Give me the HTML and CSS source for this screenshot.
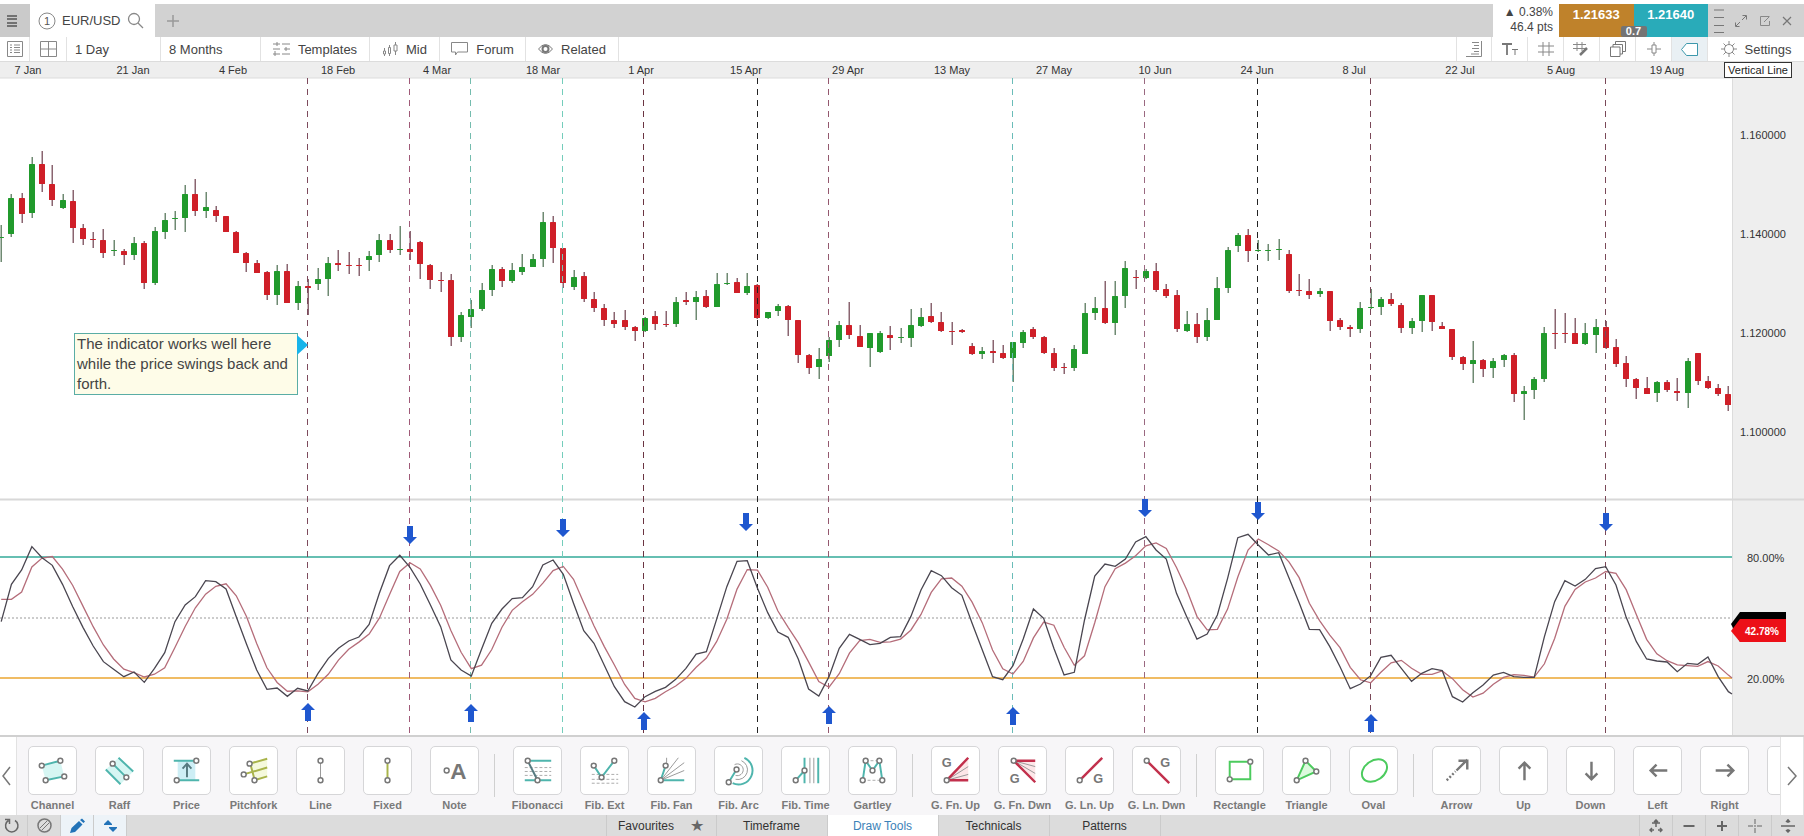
FILE: index.html
```html
<!DOCTYPE html>
<html lang="en">
<head>
  <meta charset="UTF-8">
  <meta name="viewport" content="width=device-width, initial-scale=1.0">
  <title>EUR/USD</title>
  <link rel="stylesheet" href="styles.css">
</head>
<body>
  <header class="topbar">
    <button class="menu-btn" aria-label="Menu">
      <svg width="14" height="14" viewBox="0 0 14 14"><path d="M2 2h10M2 5h10M2 9h10M2 12h10" stroke="#555" stroke-width="1.5"/></svg>
    </button>
    <div class="tab">
      <svg width="18" height="18" viewBox="0 0 18 18"><circle cx="9" cy="9" r="8" fill="none" stroke="#888"/><text x="9" y="13" font-size="11" text-anchor="middle" fill="#555">1</text></svg>
      <span>EUR/USD</span>
      <svg width="17" height="17" viewBox="0 0 17 17" fill="none" stroke="#888" stroke-width="1.3"><circle cx="7" cy="7" r="5.5"/><path d="M11 11l5 5"/></svg>
    </div>
    <button class="add-btn" aria-label="Add tab">
      <svg width="12" height="12" viewBox="0 0 12 12"><path d="M6 0v12M0 6h12" stroke="#999" stroke-width="1.5"/></svg>
    </button>
    <div class="change">
      <div>▲ 0.38%</div>
      <div>46.4 pts</div>
    </div>
    <div class="prices">
      <button class="price sell">1.21633</button>
      <button class="price buy">1.21640</button>
      <span class="spread">0.7</span>
    </div>
    <div class="window-btns">
      <svg width="10" height="26" viewBox="0 0 10 26"><path d="M0 2h10M0 9.500h10M0 17.500h10M0 24.500h10" stroke="#777"/></svg>
      <button aria-label="Expand"><svg width="12" height="12" viewBox="0 0 12 12" fill="none" stroke="#777"><path d="M7.500 .5h4v4M4.500 11.500h-4v-4M11 1L7 5M1 11l4-4"/></svg></button>
      <button aria-label="Pop out"><svg width="12" height="12" viewBox="0 0 12 12" fill="none" stroke="#888"><path d="M10.500 1.500h-9v9h9V6M5 7l5-5"/></svg></button>
      <button aria-label="Close"><svg width="10" height="10" viewBox="0 0 10 10" stroke="#777" stroke-width="1.2"><path d="M1 1l8 8M9 1L1 9"/></svg></button>
    </div>
  </header>

  <nav class="toolbar">
    <button class="tool-item w30" aria-label="List">
      <svg width="16" height="16" viewBox="0 0 16 16" fill="none" stroke="#888"><path d="M.5 .5h15v15H.5zM3 4h2M7 4h6M3 6.500h2M7 6.500h6M3 9h2M7 9h6M3 11.500h2M7 11.500h6"/></svg>
    </button>
    <button class="tool-item w37" aria-label="Layout">
      <svg width="17" height="16" viewBox="0 0 17 16" fill="none" stroke="#888"><path d="M.5 .5h16v15H.5zM8.500 .5v15M.5 8h16"/></svg>
    </button>
    <select class="tool-select w94" aria-label="Interval"><option>1 Day</option></select>
    <select class="tool-select w100" aria-label="Range"><option>8 Months</option></select>
    <button class="tool-item w109">
      <svg width="17" height="14" viewBox="0 0 17 14" stroke="#888" fill="none"><path d="M0 2h7M9 2h8M0 7h7M11 7h6M0 12h7M9 12h8M4 0v4M2 9v5M13 5v4"/></svg>
      Templates
    </button>
    <button class="tool-item w70">
      <svg width="16" height="14" viewBox="0 0 16 14" stroke="#888" fill="none"><path d="M2.500 6v8M7.500 3v11M13.500 0v13"/><path d="M1.500 9h2v3h-2zM6.500 5.500h2v6h-2zM12 3h3v6h-3z" fill="#fff"/></svg>
      Mid
    </button>
    <button class="tool-item w86">
      <svg width="17" height="14" viewBox="0 0 17 14" stroke="#888" fill="none"><path d="M.5 .5h16v9.500H6.500L4.500 13v-3h-4z"/></svg>
      Forum
    </button>
    <button class="tool-item w93">
      <svg width="15" height="12" viewBox="0 0 15 12" fill="none" stroke="#777"><path d="M.5 6Q7.500-3 14.500 6 7.500 15 .5 6z"/><circle cx="7.500" cy="6" r="3" stroke-width="2"/></svg>
      Related
    </button>
    <div class="spacer"></div>
    <button class="tool-item w36 first" aria-label="Scale">
      <svg width="16" height="16" viewBox="0 0 16 16" stroke="#888" fill="none"><path d="M15.500 0v15.500H0M6 1.500h7M8 4.500h5M6 7.500h7M8 10.500h5M5 13h8"/></svg>
    </button>
    <button class="tool-item w36" aria-label="Text size">
      <svg width="16" height="14" viewBox="0 0 16 14" stroke="#777" fill="none"><path d="M0 2h10M5 2v11" stroke-width="1.8"/><path d="M10 7.500h6M13 7.500V13"/></svg>
    </button>
    <button class="tool-item w36" aria-label="Grid">
      <svg width="16" height="16" viewBox="0 0 16 16" stroke="#888" fill="none"><path d="M5 1v14M11 1v14M0 5h16M0 11h16"/></svg>
    </button>
    <button class="tool-item w36" aria-label="Edit grid">
      <svg width="17" height="16" viewBox="0 0 17 16" stroke="#888" fill="none"><path d="M4 1v9M9 1v9M0 3.500h13M0 7.500h12"/><path d="M7 14l7-7" stroke="#777" stroke-width="2.5"/></svg>
    </button>
    <button class="tool-item w36" aria-label="Layers">
      <svg width="16" height="16" viewBox="0 0 16 16" stroke="#777" fill="none"><path d="M.5 6h9.500v9.500H.5zM3 6V3.500h9.500v9.500H10M5.500 3.500V.5h10v10h-3"/></svg>
    </button>
    <button class="tool-item w36" aria-label="Marker">
      <svg width="14" height="14" viewBox="0 0 14 14" stroke="#888" fill="none"><path d="M7 0v3M7 11v3M0 7h5M9 7h5M5 3h4v8H5z"/></svg>
    </button>
    <button class="tool-item w36 active" aria-label="Label">
      <svg width="17" height="13" viewBox="0 0 17 13" stroke="#3d98ac" fill="#fff"><path d="M5.500 .5h11v12h-11L.5 6.500z"/></svg>
    </button>
    <button class="tool-item w96">
      <svg width="16" height="16" viewBox="0 0 16 16" stroke="#888" fill="none"><circle cx="8" cy="8" r="4.500"/><path d="M8 0v3.500M8 12.500V16M0 8h3.500M12.500 8H16M2.500 2.500L5 5M11 11l2.500 2.500M13.500 2.500L11 5M5 11l-2.500 2.500"/></svg>
      Settings
    </button>
  </nav>

  <main class="chart">
    <svg id="chart" class="chart-svg" viewBox="0 0 1804 676">
      <rect x="0" y="0" width="1804" height="17" fill="#eeeeee"/>
      <rect x="1732" y="17" width="72" height="659" fill="#eeeeee"/>
      <path d="M0 .5h1804M0 17h1732M1732.500 17v659" stroke="#dcdcdc"/>
      <g id="dates" class="axis-text"></g>
      <rect x="1724.500" y="1.500" width="67" height="15" fill="#fff" stroke="#333"/>
      <text class="hint" x="1758" y="13">Vertical Line</text>
      <g transform="translate(0 17)">
        <path d="M0 421.500h1804" stroke="#d8d8d8" stroke-width="2"/>
        <path d="M0 479h1732" stroke="#66bfb2" stroke-width="2"/>
        <path d="M0 540h1732" stroke="#999" stroke-dasharray="2 2"/>
        <path d="M0 600h1732" stroke="#f0bc64" stroke-width="2"/>
        <g id="candles"></g>
        <g id="vlines"></g>
        <g id="lines" fill="none"></g>
        <g id="arrows" fill="#1f57cf"></g>
        <g id="levels" class="axis-text"></g>
        <path d="M1731 546l9-12h46v30h-46z" fill="#000"/>
        <path d="M1731 553l9-12h46v23h-46z" fill="#ec1018"/>
        <text class="tag" x="1762" y="557">42.78%</text>
        <path d="M0 658h1804" stroke="#d0d0d0" stroke-width="2"/>
      </g>
    </svg>
    <div class="note">The indicator works well here while the price swings back and forth.</div>
  </main>

  <section class="drawtools">
    <button class="scroll-btn" aria-label="Previous tools"><svg width="9" height="20" viewBox="0 0 9 20"><path d="M8 1L1 10l7 9"/></svg></button>
    <div class="tools">
      <button class="tool"><svg viewBox="0 0 48 48"><path d="M13 19l19-5 4 16-19 4z" fill="#d6f6f3"/><path class="teal" d="M13 19l19-5M17 34l19-4"/><circle cx="13" cy="19" r="2.500"/><circle cx="32" cy="14" r="2.500"/><circle cx="17" cy="34" r="2.500"/><circle cx="36" cy="30" r="2.500"/></svg>Channel</button>
      <button class="tool"><svg viewBox="0 0 48 48"><path d="M10 23L23 11l15 14-13 13z" fill="#d6f6f3"/><path class="teal" d="M10 23l15 15M23 11l15 14M17 17l14 14"/><circle cx="17" cy="17" r="2.500"/><circle cx="31" cy="31" r="2.500"/></svg>Raff</button>
      <button class="tool"><svg viewBox="0 0 48 48"><path d="M15 14h18v20H15z" fill="#cdeef5"/><path class="teal" d="M11 14h22M15 34h22"/><path class="dark" d="M24.500 31V18M20 22l4.500-5 4.500 5"/><circle cx="34" cy="14" r="2.500"/><circle cx="14" cy="34" r="2.500"/></svg>Price</button>
      <button class="tool"><svg viewBox="0 0 48 48"><path d="M22 17l16-5v18l-13 4z" fill="#f5f9dc"/><path class="olive" d="M20 17l18-5M14 28l24-7M25 34l13-4M21 18l4 15"/><circle cx="20" cy="17" r="2.500"/><circle cx="14" cy="28" r="2.500"/><circle cx="25" cy="34" r="2.500"/></svg>Pitchfork</button>
      <button class="tool"><svg viewBox="0 0 48 48"><path class="gray" d="M24 14v20"/><circle cx="24" cy="14" r="2.500"/><circle cx="24" cy="34" r="2.500"/></svg>Line</button>
      <button class="tool"><svg viewBox="0 0 48 48"><path class="olive" d="M24 14v20"/><circle cx="24" cy="14" r="2.500"/><circle cx="24" cy="34" r="2.500"/></svg>Fixed</button>
      <button class="tool"><svg viewBox="0 0 48 48"><circle cx="16" cy="24" r="2.500"/><text class="big" x="28" y="33">A</text></svg>Note</button>
      <i class="sep"></i>
      <button class="tool"><svg viewBox="0 0 48 48"><path class="dots" d="M11 21h27M11 25h27M11 29h27"/><path class="teal" d="M14 14h24M11 34h27"/><path class="dark" d="M14 14l10 20"/><circle cx="14" cy="14" r="2.500"/><circle cx="24" cy="34" r="2.500"/></svg>Fibonacci</button>
      <button class="tool"><svg viewBox="0 0 48 48"><path class="dots" d="M11 28h27M11 33h27M11 37h27"/><path class="teal" d="M13 19l8 12 13-17"/><circle cx="13" cy="19" r="2.500"/><circle cx="21" cy="31" r="2.500"/><circle cx="34" cy="14" r="2.500"/></svg>Fib. Ext</button>
      <button class="tool"><svg viewBox="0 0 48 48"><path class="gray" d="M13 34L31 11M13 34l24-18M13 34l24-10M19 11v6"/><path class="teal" d="M13 34l5-15M13 34h24"/><circle cx="18" cy="19" r="2.500"/><circle cx="13" cy="34" r="2.500"/></svg>Fib. Fan</button>
      <button class="tool"><svg viewBox="0 0 48 48"><path class="gray" d="M20 18a6 6 0 1 1 1 11M27 14a10 10 0 0 1-6 19"/><path class="teal" d="M30 11a14 14 0 0 1-12 26M14 36l8-13"/><circle cx="22" cy="23" r="2.500"/><circle cx="14" cy="36" r="2.500"/></svg>Fib. Arc</button>
      <button class="tool"><svg viewBox="0 0 48 48"><path class="gray" d="M28.500 11v26M32.500 11v26"/><path class="teal" d="M23 11v26M37 11v26M14 34l9-10"/><circle cx="23" cy="24" r="2.500"/><circle cx="14" cy="34" r="2.500"/></svg>Fib. Time</button>
      <button class="tool"><svg viewBox="0 0 48 48"><path class="dots" d="M14 34h20M17 14h14"/><path class="teal" d="M14 34l3-20 7 10 7-10 3 20"/><circle cx="17" cy="14" r="2.500"/><circle cx="31" cy="14" r="2.500"/><circle cx="24" cy="24" r="2.500"/><circle cx="14" cy="34" r="2.500"/><circle cx="34" cy="34" r="2.500"/></svg>Gartley</button>
      <i class="sep"></i>
      <button class="tool"><svg viewBox="0 0 48 48"><path d="M15 34l22-23v23z" fill="#fde6e8"/><path class="gray" d="M15 34l22-14M15 34l22-6"/><path class="red" d="M15 34l22-23M15 34h22"/><circle cx="15" cy="34" r="2.500"/><text x="15" y="20">G</text></svg>G. Fn. Up</button>
      <button class="tool"><svg viewBox="0 0 48 48"><path d="M15 14h22v22z" fill="#fde6e8"/><path class="gray" d="M15 14l22 6M15 14l22 13"/><path class="red" d="M15 14l22 22M15 14h22"/><circle cx="15" cy="14" r="2.500"/><text x="16" y="37">G</text></svg>G. Fn. Dwn</button>
      <button class="tool"><svg viewBox="0 0 48 48"><path class="red" d="M14 34l23-23"/><circle cx="14" cy="34" r="2.500"/><text x="33" y="37">G</text></svg>G. Ln. Up</button>
      <button class="tool"><svg viewBox="0 0 48 48"><path class="red" d="M14 14l23 23"/><circle cx="14" cy="14" r="2.500"/><text x="33" y="20">G</text></svg>G. Ln. Dwn</button>
      <i class="sep"></i>
      <button class="tool"><svg viewBox="0 0 48 48"><path class="green" d="M14 15h21v18H14z"/><circle cx="35" cy="15" r="2.500"/><circle cx="14" cy="33" r="2.500"/></svg>Rectangle</button>
      <button class="tool"><svg viewBox="0 0 48 48"><path class="green" d="M23 14l11 11-20 9z" fill="#dcfadd"/><circle cx="23" cy="14" r="2.500"/><circle cx="34" cy="25" r="2.500"/><circle cx="14" cy="34" r="2.500"/></svg>Triangle</button>
      <button class="tool"><svg viewBox="0 0 48 48"><ellipse class="green" cx="25" cy="24" rx="14" ry="10" transform="rotate(-35 25 24)"/></svg>Oval</button>
      <i class="sep"></i>
      <button class="tool"><svg viewBox="0 0 48 48"><path class="arrow" d="M14 34l9-9" stroke-dasharray="2 2"/><path class="arrow" d="M24 24l11-11M26 14h9v9"/></svg>Arrow</button>
      <button class="tool"><svg viewBox="0 0 48 48"><path class="arrow" d="M25 34V16M19 22l6-6 6 6"/></svg>Up</button>
      <button class="tool"><svg viewBox="0 0 48 48"><path class="arrow" d="M25 15v18M19 27l6 6 6-6"/></svg>Down</button>
      <button class="tool"><svg viewBox="0 0 48 48"><path class="arrow" d="M34 24H17M23 18l-6 6 6 6"/></svg>Left</button>
      <button class="tool"><svg viewBox="0 0 48 48"><path class="arrow" d="M15 24h17M27 18l6 6-6 6"/></svg>Right</button>
      <button class="tool" aria-label="More"><svg viewBox="0 0 48 48"></svg></button>
    </div>
    <button class="scroll-btn next" aria-label="Next tools"><svg width="10" height="20" viewBox="0 0 10 20"><path d="M1 1l8 9-8 9"/></svg></button>
  </section>

  <footer class="bottombar">
    <div class="group">
      <button class="w28" aria-label="Reload"><svg width="16" height="16" viewBox="0 0 16 16" fill="none" stroke="#666" stroke-width="1.500"><path d="M11 2.500a6.200 6.200 0 1 1-6.500 0M1 1.500h4.500V6"/></svg></button>
      <button aria-label="Clear"><svg width="15" height="15" viewBox="0 0 15 15" fill="none" stroke="#777"><circle cx="7.500" cy="7.500" r="6.500" stroke-width="1.5"/><path d="M3 10l7-7M5 12l7-7"/></svg></button>
      <button class="on" aria-label="Draw"><svg width="16" height="16" viewBox="0 0 16 16" fill="#2273b8"><path d="M1 15l1.500-5L10 3l3.500 3.500L6 14zM11 2l2-1.500L16 3.500 14.500 5z"/></svg></button>
      <button class="on" aria-label="Signals"><svg width="14" height="14" viewBox="0 0 14 14" fill="#2273b8"><path d="M5 1l4 4v1H1V5zM10 13L6 9V8h8v1z"/></svg></button>
    </div>
    <div class="group tabs">
      <button>Favourites <span class="star">★</span></button>
      <button>Timeframe</button>
      <button class="current">Draw Tools</button>
      <button>Technicals</button>
      <button>Patterns</button>
    </div>
    <div class="group right">
      <button aria-label="Fit"><svg viewBox="0 0 14 14"><path d="M7 1v7M3 4h8M1 11h4M9 11h4M3 9l-2 2 2 2M11 9l2 2-2 2M5 3l2-2 2 2" stroke-width="1.5"/></svg></button>
      <button aria-label="Zoom out"><svg viewBox="0 0 14 14"><path d="M1.500 7h11" stroke-width="2"/></svg></button>
      <button aria-label="Zoom in"><svg viewBox="0 0 14 14"><path d="M2 7h10M7 2v10" stroke-width="2"/></svg></button>
      <button aria-label="Crosshair"><svg viewBox="0 0 14 14"><path d="M0 7h5M9 7h5M7 0v5M7 9v5M6 7h2"/></svg></button>
      <button aria-label="Split"><svg viewBox="0 0 14 14"><path d="M0 7h14M7 0v4M7 10v4M5 3l2-2 2 2M5 11l2 2 2-2" stroke-width="1.5"/></svg></button>
    </div>
  </footer>

  <script src="chart.js"></script>
</body>
</html>
```
FILE: styles.css
```css
* {
  box-sizing: border-box;
}
body {
  margin: 0;
  padding-top: 4px;
  background: #fff;
  color: #444;
  font-family: "Liberation Sans", Arial, sans-serif;
  font-size: 13px;
  overflow: hidden;
}
button, select {
  border: 0;
  margin: 0;
  padding: 0;
  background: none;
  color: inherit;
  font: inherit;
  cursor: pointer;
}
svg {
  display: block;
  flex: none;
}

/* top bar */
.topbar {
  display: flex;
  height: 33px;
  background: #d2d2d2;
}
.topbar button {
  display: flex;
  align-items: center;
  justify-content: center;
}
.menu-btn {
  width: 30px;
  padding-right: 6px;
  background: #cacaca;
}
.tab {
  display: flex;
  align-items: center;
  gap: 6px;
  width: 125px;
  padding: 0 8px;
  background: #fff;
}
.add-btn {
  width: 36px;
}
.change {
  width: 66px;
  margin-left: auto;
  padding: 1px 6px 0 0;
  background: #fff;
  font-size: 12px;
  line-height: 15px;
  text-align: right;
  white-space: nowrap;
}
.prices {
  position: relative;
  display: flex;
  width: 149px;
}
.topbar .price {
  flex: 1;
  align-items: flex-start;
  padding-top: 3px;
  color: #fff;
  font-weight: bold;
}
.sell {
  background: #bf822b;
}
.buy {
  background: #29abb9;
}
.spread {
  position: absolute;
  left: 50%;
  bottom: 0;
  width: 26px;
  margin-left: -13px;
  border-radius: 2px;
  background: #747474;
  color: #fff;
  font-size: 11px;
  font-weight: bold;
  line-height: 11px;
  text-align: center;
}
.window-btns {
  display: flex;
  align-items: center;
  justify-content: space-between;
  width: 96px;
  padding: 0 12px 0 6px;
}

/* toolbar */
.toolbar {
  display: flex;
  height: 24px;
}
.tool-item, .tool-select {
  display: flex;
  align-items: center;
  justify-content: center;
  gap: 8px;
  border-right: 1px solid #e2e2e2;
  white-space: nowrap;
}
.tool-select {
  padding-left: 8px;
  appearance: none;
}
.tool-item:last-child {
  border-right: 0;
}
.tool-item.first {
  border-left: 1px solid #e2e2e2;
}
.tool-item.active {
  background: #e9f0f4;
}
.spacer {
  flex: 1;
}
.w28 { width: 28px; }
.w30 { width: 30px; }
.w36 { width: 36px; }
.w37 { width: 37px; }
.w70 { width: 70px; }
.w86 { width: 86px; }
.w93 { width: 93px; }
.w94 { width: 94px; }
.w96 { width: 96px; }
.w100 { width: 100px; }
.w109 { width: 109px; }

/* chart */
.chart {
  position: relative;
}
.chart-svg {
  width: 100%;
  height: auto;
}
.axis-text {
  fill: #333;
  font-size: 11px;
}
#dates {
  text-anchor: middle;
}
.hint {
  fill: #222;
  font-size: 11px;
  text-anchor: middle;
}
.tag {
  fill: #fff;
  font-size: 10px;
  font-weight: bold;
  text-anchor: middle;
}
.note {
  position: absolute;
  left: 74px;
  top: 272px;
  width: 224px;
  padding: 0 2px;
  border: 1px solid #5aada5;
  background: #fefce8;
  color: #444;
  font-size: 15px;
  line-height: 20px;
}
.note::after {
  content: "";
  position: absolute;
  left: 100%;
  top: 1px;
  border: 10px solid transparent;
  border-left: 11px solid #18b4ea;
  border-right: 0;
}

/* drawing tools */
.drawtools {
  display: flex;
  height: 78px;
  background: #f7f6f8;
}
.scroll-btn {
  display: flex;
  flex: none;
  align-items: center;
  justify-content: center;
  width: 17px;
  padding-right: 4px;
  border-right: 1px solid #e2e2e2;
  background: #fff;
}
.scroll-btn.next {
  width: 24px;
  padding: 0;
  border-left: 1px solid #e2e2e2;
}
.scroll-btn svg {
  fill: none;
  stroke: #777;
  stroke-width: 1.5;
}
.tools {
  display: flex;
  flex: 1;
  min-width: 0;
  padding: 9px 0 0 2px;
  overflow: hidden;
}
.tool {
  display: flex;
  flex: none;
  flex-direction: column;
  align-items: center;
  gap: 3px;
  width: 67px;
  color: #7a7a7a;
  font-size: 11px;
  font-weight: bold;
  line-height: 14px;
  white-space: nowrap;
}
.tool svg {
  width: 49px;
  height: 49px;
  border: 1px solid #d6d6d8;
  border-radius: 5px;
  background: #fff;
  fill: none;
}
.tool circle {
  fill: #fff;
  stroke: #777;
  stroke-width: 1.5;
}
.tool text {
  fill: #777;
  font-size: 13px;
  text-anchor: middle;
}
.tool .big {
  font-size: 23px;
}
.teal {
  stroke: #4fb5ad;
  stroke-width: 2;
}
.olive {
  stroke: #a9b44a;
  stroke-width: 2;
}
.red {
  stroke: #c2304c;
  stroke-width: 2.5;
}
.green {
  stroke: #4ccb5e;
  stroke-width: 2;
}
.gray {
  stroke: #999;
}
.dark {
  stroke: #567a80;
  stroke-width: 2;
}
.dots {
  stroke: #aaa;
  stroke-dasharray: 3 2;
}
.arrow {
  stroke: #777;
  stroke-width: 2.5;
}
.sep {
  flex: none;
  width: 16px;
  height: 43px;
  margin-top: 8px;
  background: linear-gradient(#d0d0d0, #d0d0d0) 6px 0 / 1px 100% no-repeat;
}

/* bottom bar */
.bottombar {
  display: flex;
  justify-content: space-between;
  height: 21px;
  background: #dcdcdc;
}
.group {
  display: flex;
}
.group button {
  display: flex;
  align-items: center;
  justify-content: center;
  width: 33px;
  border-right: 1px solid #cbcbcb;
}
.group .w28 {
  width: 28px;
  padding-right: 4px;
}
.group .on {
  background: #edf3f8;
}
.tabs button {
  width: 111px;
  color: #333;
  font-size: 12px;
}
.tabs button:first-child {
  gap: 16px;
  border-left: 1px solid #cbcbcb;
}
.star {
  color: #666;
  font-size: 16px;
  line-height: 16px;
}
.tabs .current {
  background: #fff;
  color: #3c82b8;
}
.right button {
  border-right: 0;
  border-left: 1px solid #cbcbcb;
}
.right svg {
  width: 14px;
  height: 14px;
  fill: none;
  stroke: #666;
  stroke-width: 1;
}
```
FILE: chart.js
```js
// high, body top, body bottom, low, g = up / r = down
const candles = `
147 159 160 184 g|116 120 156 159 g|115 120 136 145 r|79 86 135 140 g|73 86 106 114 r
87 106 122 128 r|116 122 130 131 g|112 123 150 165 r|146 150 161 167 r|154 161 162 170 r
151 162 175 180 r|162 172 173 178 g|171 173 177 187 r|159 165 177 182 g|163 165 205 211 r
149 153 205 207 g|135 142 154 161 g|133 140 141 152 g|107 116 140 154 g|101 116 133 138 r
114 129 133 140 g|128 132 138 144 r|138 138 154 154 r|153 154 175 175 r|174 175 185 194 r
182 185 195 195 r|193 194 217 222 r|187 193 217 227 g|186 193 225 225 r|203 208 225 232 g
201 208 210 237 r|190 201 206 212 g|179 185 201 218 g|172 185 187 193 r|174 187 188 196 r
180 187 188 198 r|173 178 182 193 g|156 162 177 184 g|156 162 172 175 r|148 171 172 177 g
153 171 174 182 r|163 164 186 201 r|186 187 202 211 r|194 202 203 214 r|196 202 259 268 r
234 237 259 264 g|222 231 239 250 g|205 212 231 233 g|187 191 212 218 g|189 191 203 209 r
185 192 203 205 g|176 189 194 197 g|176 181 189 189 g|134 144 181 189 g|138 144 170 185 r
170 170 205 210 r|192 199 209 212 g|194 198 221 224 r|214 221 230 234 r|226 230 242 248 r
234 242 246 250 r|232 242 249 252 r|248 249 253 263 r|239 240 253 254 g|233 238 246 252 r
233 246 247 249 r|219 224 246 249 g|214 222 224 227 r|213 219 224 242 g|212 218 229 230 r
195 206 229 229 g|195 205 206 207 g|200 204 215 215 r|195 208 215 217 g|206 207 240 241 r
234 234 240 241 g|226 228 233 238 g|227 228 242 258 r|242 242 277 285 r|276 277 290 296 r
270 281 289 301 g|259 262 278 284 g|243 247 262 269 g|224 247 257 261 r|247 258 269 269 r
255 255 270 289 g|253 255 274 275 g|248 257 260 272 r|250 259 260 265 g|231 247 260 269 g
230 239 248 249 g|225 238 244 245 r|234 244 253 254 r|244 253 254 267 r|251 252 254 255 r
265 268 276 277 r|269 273 276 281 g|262 273 275 285 r|267 275 280 281 r|264 264 280 304 g
252 254 265 270 g|249 251 259 261 r|258 259 275 276 r|270 275 290 293 r|285 289 290 296 r
267 271 290 293 g|225 235 276 276 g|219 230 235 242 g|203 230 245 246 r|203 218 245 257 g
183 190 218 230 g|192 199 200 211 r|191 193 200 201 g|185 193 212 214 r|206 211 218 220 r
212 217 251 254 r|233 246 253 254 g|235 246 259 265 r|230 242 259 263 g|199 210 242 242 g
169 172 210 215 g|155 157 168 174 g|151 157 173 184 r|162 172 173 174 g|166 172 173 183 g
161 171 172 182 g|172 176 213 215 r|196 212 213 218 r|201 213 217 221 r|210 213 216 219 g
213 213 243 253 r|240 242 249 252 r|247 249 251 259 r|224 230 251 255 g|211 229 230 231 g
219 221 229 237 g|215 221 226 228 r|225 227 250 255 r|240 243 250 256 g|217 217 243 254 g
217 217 244 253 r|244 248 251 251 r|251 251 279 282 r|278 279 286 292 r|263 282 286 305 g
281 282 291 299 r|280 283 290 300 g|276 277 282 289 g|275 277 316 324 r|308 313 316 342 g
299 301 312 321 g|249 255 301 304 g|231 255 256 271 r|235 255 256 265 r|240 255 266 266 r
245 255 266 267 g|241 249 257 275 g|243 249 270 271 r|261 269 286 289 r|278 285 301 309 r
300 301 310 321 r|299 310 316 316 r|303 304 315 324 g|302 304 312 314 r|300 313 315 323 r
280 283 315 330 g|275 275 303 307 r|298 303 310 311 r|306 310 316 318 r|308 316 327 333 r
`.trim().split(/[|\n]/);

// stochastic %K, one value per candle, in thirds of a pixel below the pane top
const stoch = [
  395, 283, 240, 170, 203, 226, 283, 350, 412, 468, 515, 538, 560, 546, 577, 535, 488,
  395, 345, 320, 272, 275, 297, 380, 462, 540, 598, 594, 619, 595, 603, 550, 506, 475,
  453, 441, 403, 310, 227, 196, 232, 282, 345, 410, 510, 540, 558, 478, 400, 357, 326,
  323, 290, 225, 210, 253, 340, 422, 460, 525, 590, 635, 651, 620, 604, 592, 568, 535,
  492, 485, 388, 290, 214, 212, 295, 368, 426, 442, 508, 597, 618, 560, 475, 433, 448,
  464, 460, 442, 440, 380, 300, 242, 257, 293, 316, 400, 480, 560, 569, 527, 447, 357,
  385, 475, 555, 547, 390, 258, 222, 229, 207, 156, 140, 180, 207, 310, 380, 447, 432,
  375, 265, 143, 133, 165, 195, 188, 263, 338, 418, 419, 470, 530, 596, 582, 557, 502,
  496, 535, 574, 550, 536, 542, 620, 636, 608, 585, 555, 547, 560, 562, 562, 440, 335,
  272, 288, 268, 236, 230, 285, 382, 455, 507, 513, 516, 545, 520, 523, 501, 560, 605
];

const dates = [
  [28, '7 Jan'], [133, '21 Jan'], [233, '4 Feb'], [338, '18 Feb'], [437, '4 Mar'],
  [543, '18 Mar'], [641, '1 Apr'], [746, '15 Apr'], [848, '29 Apr'], [952, '13 May'],
  [1054, '27 May'], [1155, '10 Jun'], [1257, '24 Jun'], [1354, '8 Jul'], [1460, '22 Jul'],
  [1561, '5 Aug'], [1667, '19 Aug']
];

const levels = [
  [1740, 61, '1.160000'], [1740, 160, '1.140000'], [1740, 259, '1.120000'],
  [1740, 358, '1.100000'], [1747, 484, '80.00%'], [1747, 605, '20.00%']
];

const vlines = [
  [308, '#7d4a5c'], [410, '#a05a78'], [471, '#74bcae'], [563, '#74cdbb'],
  [644, '#6b3442'], [758, '#222222'], [829, '#94586e'], [1013, '#6abcb8'],
  [1145, '#9a6880'], [1258, '#222222'], [1371, '#7a4858'], [1606, '#7a4858']
];

// x and top of each signal arrow
const down = [[410, 448], [563, 441], [746, 435], [1145, 421], [1258, 424], [1606, 435]];
const up = [[308, 625], [471, 626], [644, 634], [829, 628], [1013, 629], [1371, 636]];

const px = i => 1.2 + i * 10.22;

function fill(id, html) {
  document.getElementById(id).innerHTML = html;
}

fill('candles', candles.map((row, i) => {
  const [high, top, bottom, low, dir] = row.split(' ');
  const color = dir === 'g' ? '#219a2c' : '#cf1f28';
  const wick = dir === 'g' ? '#6f8a72' : '#8a6570';
  const x = Math.round(px(i));
  return `<rect x="${x - 0.5}" y="${high}" width="1.5" height="${low - high}" fill="${wick}"/>` +
    `<rect x="${x - 3}" y="${top}" width="6" height="${bottom - top}" rx="0.5" fill="${color}"/>`;
}).join(''));

const y = v => 412 + v / 3;
const kPoints = stoch.map((v, i) => `${px(i)},${y(v)}`).join(' ');
const dPoints = stoch.map((v, i) => {
  const avg = i < 2 ? 328 : (v + stoch[i - 1] + stoch[i - 2]) / 3;
  return `${px(i)},${y(avg)}`;
}).join(' ');
// both lines run on to the edge of the price axis
fill('lines',
  `<polyline points="${dPoints} 1732,600" stroke="#b56d7a" stroke-width="1.3"/>` +
  `<polyline points="${kPoints} 1732,616" stroke="#4a4650" stroke-width="1.3"/>`);

fill('dates', dates.map(([x, t]) => `<text x="${x}" y="13">${t}</text>`).join(''));
fill('levels', levels.map(([x, y, t]) => `<text x="${x}" y="${y}">${t}</text>`).join(''));
fill('vlines', vlines.map(([x, c]) =>
  `<path d="M${x - 0.5} 0V657" stroke="${c}" stroke-dasharray="6 5"/>`).join(''));
fill('arrows',
  down.map(([x, y]) => `<path d="M${x - 3} ${y}h6v11h4l-7 7-7-7h4z"/>`).join('') +
  up.map(([x, y]) => `<path d="M${x} ${y}l7 7h-4v11h-6v-11h-4z"/>`).join(''));
```
